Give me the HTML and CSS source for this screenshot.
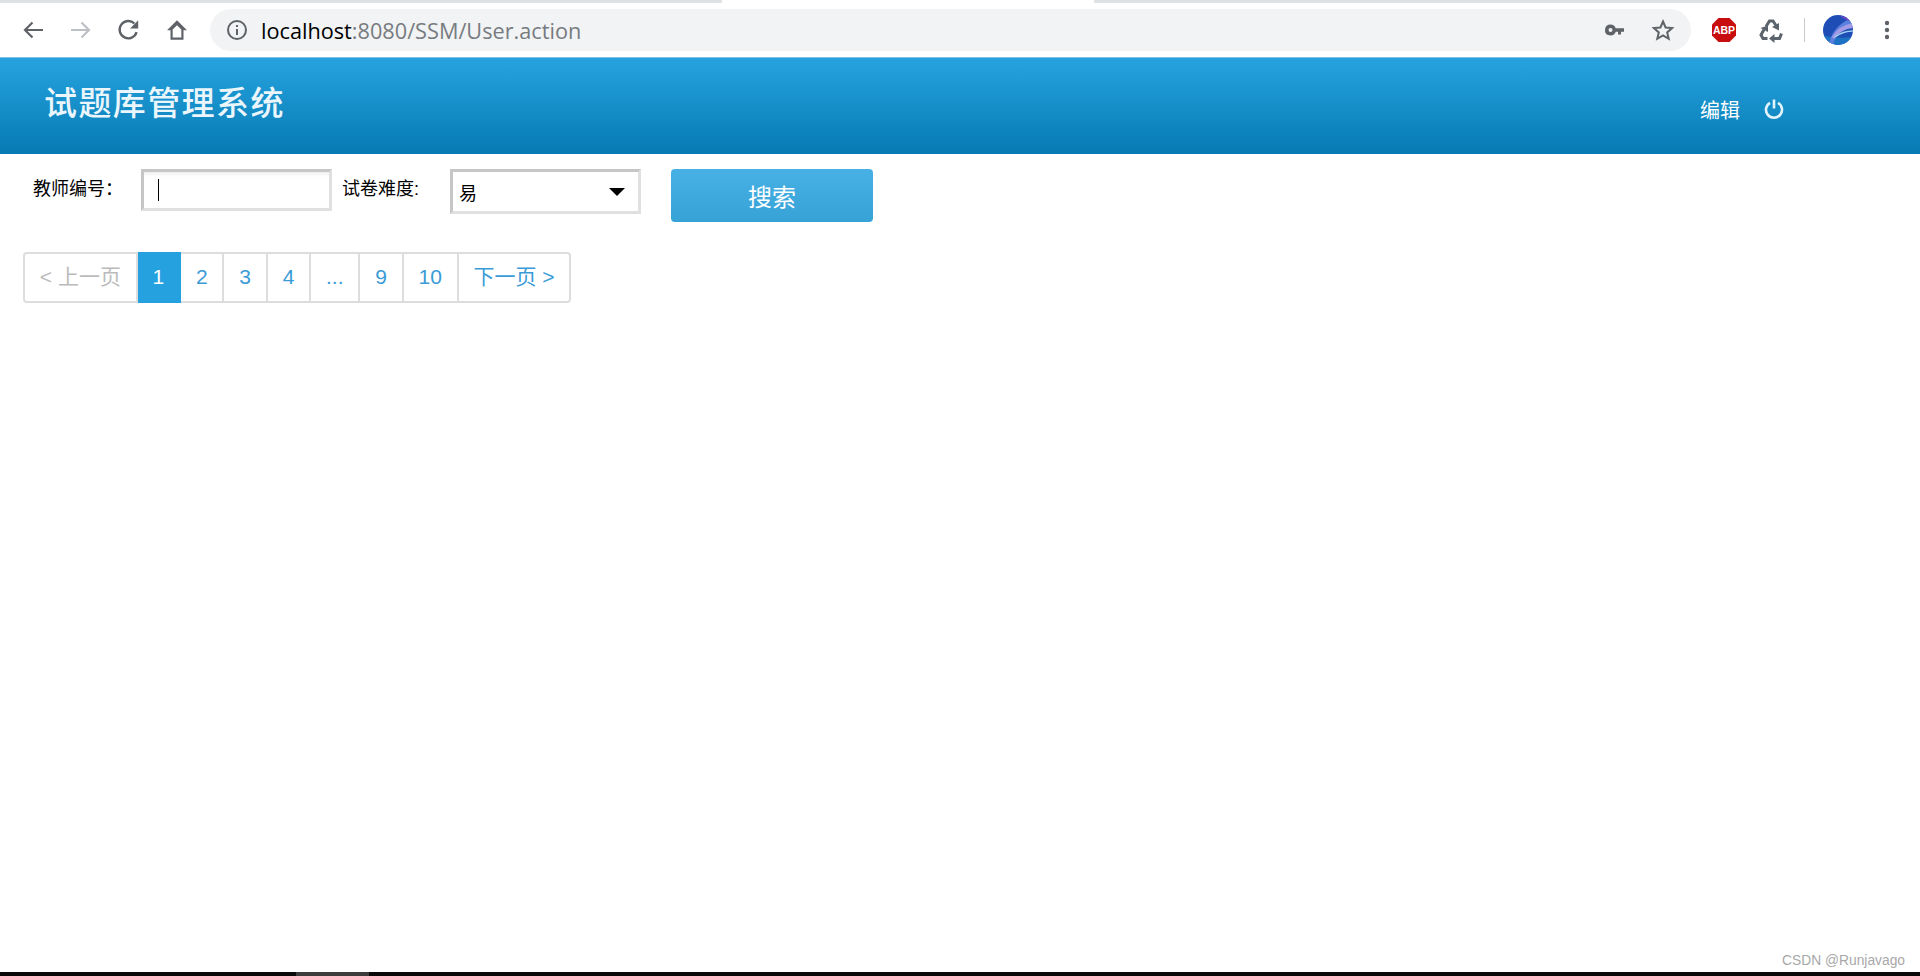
FILE: index.html
```html
<!DOCTYPE html>
<html lang="zh-CN">
<head>
  <meta charset="UTF-8">
  <meta name="viewport" content="width=device-width, initial-scale=1.0">
  <title>试题库管理系统</title>
  <link rel="stylesheet" href="styles.css">
</head>
<body>
  <div class="tabstrip">
    <div class="tabstrip-left"></div>
    <div class="tabstrip-active"></div>
    <div class="tabstrip-right"></div>
  </div>

  <div class="toolbar">
    <div class="nav-btn">
      <svg width="24" height="24" viewBox="0 0 24 24"><path d="M22 12H4M11.500 4.500L4 12l7.500 7.500" fill="none" stroke="#5f6368" stroke-width="2.200"/></svg>
    </div>
    <div class="nav-btn">
      <svg width="24" height="24" viewBox="0 0 24 24"><path d="M2 12h18M12.500 4.500L20 12l-7.500 7.500" fill="none" stroke="#bdc1c6" stroke-width="2.200"/></svg>
    </div>
    <div class="nav-btn">
      <svg width="26" height="26" viewBox="0 0 24 24"><path d="M19 14a8 8 0 1 1-2-8" fill="none" stroke="#5f6368" stroke-width="2.200"/><path d="M20.500 3v7.500H13z" fill="#5f6368"/></svg>
    </div>
    <div class="nav-btn">
      <svg width="26" height="26" viewBox="0 0 24 24"><path d="M12 3L2.800 12.300h3.200v8.700h12v-8.700h3.200zM8 19v-7.500l4-4 4 4V19z" fill="#5f6368" fill-rule="evenodd"/></svg>
    </div>

    <div class="omnibox">
      <svg class="info-icon" width="22" height="22" viewBox="0 0 22 22"><circle cx="11" cy="11" r="9" fill="none" stroke="#5f6368" stroke-width="2"/><path d="M10 10h2v6h-2zM10 6h2v2h-2z" fill="#5f6368"/></svg>
      <div class="url"><span class="url-host">localhost</span>:8080/SSM/User.action</div>
      <svg class="key-icon" width="24" height="24" viewBox="0 0 24 24"><path d="M7.500 6.500a5.500 5.500 0 1 0 5.200 7.300H15v2.700h3v-2.700h3v-3.600h-8.300a5.500 5.500 0 0 0-5.200-3.700zm0 3.500a2 2 0 1 1 0 4 2 2 0 0 1 0-4z" fill="#5f6368" fill-rule="evenodd"/></svg>
      <svg class="star-icon" width="24" height="24" viewBox="0 0 24 24"><path d="M12 3.500l2.600 6 6.500.6-4.900 4.300 1.500 6.400-5.700-3.400-5.700 3.400 1.500-6.400-4.900-4.300 6.500-.6z" fill="none" stroke="#5f6368" stroke-width="2" stroke-linejoin="miter"/></svg>
    </div>

    <div class="ext-icons">
      <svg class="abp-icon" width="26" height="26" viewBox="0 0 26 26"><path d="M7.500 1h11L25 7.500v11L18.500 25h-11L1 18.500v-11z" fill="#c70d0d"/><text x="13" y="17" text-anchor="middle" class="abp-text">ABP</text></svg>
      <svg class="recycle-icon" width="26" height="26" viewBox="0 0 26 26">
        <path d="M8 9.500L11.500 4h3.500L18 8.500" fill="none" stroke="#5b646c" stroke-width="3"/>
        <path d="M14 10l7-4v7.500z" fill="#5b646c"/>
        <path d="M9.500 21.500H5L3 18l3-5.500" fill="none" stroke="#5b646c" stroke-width="3"/>
        <path d="M2.500 11l7.500-2.500V15z" fill="#5b646c"/>
        <path d="M23.500 16.500L21.500 21.500H15" fill="none" stroke="#5b646c" stroke-width="3"/>
        <path d="M11 21.500l5.500-4.500v9z" fill="#5b646c"/>
      </svg>
      <div class="ext-divider"></div>
      <svg class="avatar" width="30" height="30" viewBox="0 0 30 30">
        <defs><clipPath id="avatarClip"><circle cx="15" cy="15" r="15"/></clipPath></defs>
        <g clip-path="url(#avatarClip)">
          <rect width="30" height="30" fill="#1d4db5"/>
          <path d="M0 30L0 20Q12 24 30 22V30z" fill="#1c73c4"/>
          <path d="M6 30Q8 12 30 2V8Q14 14 10 30z" fill="#5b7fdc"/>
          <path d="M9 22Q16 10 30 8V13Q18 14 11 24z" fill="#a49be6"/>
          <path d="M12 22Q20 16 30 16" fill="none" stroke="#9fd0f2" stroke-width="1.500"/>
          <path d="M16 0Q24 4 30 0V6Q22 6 16 0z" fill="#6b46c9"/>
        </g>
      </svg>
      <svg class="menu-icon" width="6" height="22" viewBox="0 0 6 22"><circle cx="3" cy="4" r="2.200" fill="#5f6368"/><circle cx="3" cy="11" r="2.200" fill="#5f6368"/><circle cx="3" cy="18" r="2.200" fill="#5f6368"/></svg>
    </div>
  </div>

  <header class="site-header">
    <h1 class="site-title">试题库管理系统</h1>
    <div class="header-actions">
      <a class="header-link">编辑</a>
      <svg class="power-icon" width="22" height="22" viewBox="0 0 22 22"><path d="M7 4.800a8 8 0 1 0 8 0" fill="none" stroke="#e3f3fb" stroke-width="2.600"/><path d="M11 1.500v9" stroke="#e3f3fb" stroke-width="2.600"/></svg>
    </div>
  </header>

  <main class="content">
    <form class="search-form">
      <label class="field-label">教师编号：</label>
      <div class="text-field">
        <input class="text-input" type="text">
        <span class="caret"></span>
      </div>
      <label class="field-label field-label-second">试卷难度:</label>
      <div class="select-field">
        <select class="select-input">
          <option>易</option>
          <option>中</option>
          <option>难</option>
        </select>
      </div>
      <button class="search-btn" type="button">搜索</button>
    </form>

    <ul class="pagination">
      <li class="page-item disabled">&lt; 上一页</li>
      <li class="page-item active">1</li>
      <li class="page-item">2</li>
      <li class="page-item">3</li>
      <li class="page-item">4</li>
      <li class="page-item">...</li>
      <li class="page-item">9</li>
      <li class="page-item">10</li>
      <li class="page-item">下一页 &gt;</li>
    </ul>
  </main>

  <div class="watermark">CSDN @Runjavago</div>

  <div class="taskbar">
    <div class="taskbar-item"></div>
  </div>
</body>
</html>
```

FILE: styles.css
```css
* {
  box-sizing: border-box;
}

html, body {
  height: 100%;
}

body {
  margin: 0;
  display: flex;
  flex-direction: column;
  position: relative;
  overflow: hidden;
  background-color: #fff;
  font-family: "Liberation Sans", "Noto Sans CJK SC", sans-serif;
  color: #000;
}

/* browser chrome */
.tabstrip {
  display: flex;
  height: 3px;
  flex: none;
}

.tabstrip-left {
  width: 722px;
  background-color: #dee1e6;
}

.tabstrip-active {
  width: 372px;
  background-color: #fff;
}

.tabstrip-right {
  flex: 1;
  background-color: #dee1e6;
}

.toolbar {
  display: flex;
  align-items: center;
  height: 54px;
  flex: none;
  padding-left: 15px;
  background-color: #fff;
}

.nav-btn {
  display: flex;
  align-items: center;
  justify-content: center;
  width: 36px;
  height: 36px;
  margin-right: 12px;
}

.omnibox {
  display: flex;
  align-items: center;
  width: 1481px;
  height: 42px;
  margin-left: 3px;
  padding: 0 10px 0 16px;
  border-radius: 21px;
  background-color: #f1f3f4;
}

.url {
  flex: 1;
  margin-left: 13px;
  font-family: "Open Sans", "Noto Sans", sans-serif;
  font-size: 21.700px;
  color: #777b80;
}

.url-host {
  color: #000;
}

.key-icon {
  margin-right: 24px;
}

.star-icon {
  margin-right: 6px;
}

.ext-icons {
  display: flex;
  align-items: center;
  flex: 1;
  padding-left: 20px;
}

.abp-text {
  font-family: "Liberation Sans", sans-serif;
  font-size: 10.500px;
  font-weight: 700;
  fill: #fff;
}

.recycle-icon {
  margin-left: 21px;
}

.ext-divider {
  width: 1px;
  height: 24px;
  margin-left: 20px;
  background-color: #ccc;
}

.avatar {
  margin-left: 18px;
}

.menu-icon {
  margin-left: 31px;
}

/* page header */
.site-header {
  display: flex;
  align-items: center;
  justify-content: space-between;
  height: 97px;
  flex: none;
  padding: 0 135px 0 44px;
  border-top: 1px solid #7fc0e0;
  background: linear-gradient(to bottom, #26a3df, #067ab3);
}

.site-title {
  margin: 0 0 11px;
  font-size: 33px;
  font-weight: 500;
  letter-spacing: 1.400px;
  color: #eaf6fc;
}

.header-actions {
  display: flex;
  align-items: center;
  gap: 23px;
  margin-top: 6px;
}

.header-link {
  font-size: 20px;
  color: #fff;
}

/* search form */
.content {
  flex: 1;
  padding: 15px 0 0 23px;
}

.search-form {
  display: flex;
  align-items: flex-start;
}

.field-label {
  margin-left: 10px;
  width: 108px;
  font-size: 18px;
  line-height: 40px;
}

.field-label-second {
  margin-left: 10px;
}

.text-field {
  position: relative;
  width: 191px;
  height: 42px;
}

.text-input {
  display: block;
  width: 100%;
  height: 100%;
  border: 3px solid;
  border-color: #c6c6c6 #e0e0e0 #e0e0e0 #c6c6c6;
  outline: none;
  box-shadow: inset 0 5px 5px -4px #e4e4e4;
  background-color: #fff;
}

.caret {
  position: absolute;
  left: 17px;
  top: 10px;
  width: 1px;
  height: 22px;
  background-color: #000;
}

.select-field {
  position: relative;
  width: 191px;
  height: 45px;
}

.select-field::after {
  content: "";
  position: absolute;
  left: 159px;
  top: 19px;
  border-left: 8px solid transparent;
  border-right: 8px solid transparent;
  border-top: 8px solid #000;
}

.select-input {
  width: 100%;
  height: 100%;
  padding: 4px 0 0 6px;
  border: 3px solid;
  border-color: #c6c6c6 #e0e0e0 #e0e0e0 #c6c6c6;
  border-radius: 0;
  outline: none;
  appearance: none;
  background-color: #fff;
  font-family: "Liberation Sans", "Noto Sans CJK SC", sans-serif;
  font-size: 18px;
  color: #000;
}

.search-btn {
  width: 202px;
  height: 53px;
  margin-left: 30px;
  border: none;
  border-radius: 4px;
  background: linear-gradient(to bottom, #47b1e6, #37a2d6);
  font-family: "Liberation Sans", "Noto Sans CJK SC", sans-serif;
  font-size: 24px;
  color: #fff;
}

/* pagination */
.pagination {
  display: inline-flex;
  margin: 30px 0 0;
  padding: 0;
  list-style: none;
}

.page-item {
  height: 51px;
  padding: 0 14.830px;
  border: 2px solid #ddd;
  border-left-width: 0;
  font-size: 21px;
  line-height: 45px;
  color: #3a9bd6;
}

.page-item:first-child {
  border-left-width: 2px;
  border-radius: 4px 0 0 4px;
}

.page-item:last-child {
  border-radius: 0 4px 4px 0;
}

.page-item.disabled {
  color: #bbb;
}

.page-item.active {
  border-color: #25a1df;
  background-color: #25a1df;
  color: #fff;
}

/* screenshot leftovers */
.watermark {
  position: absolute;
  right: 15px;
  bottom: 8px;
  font-size: 13.800px;
  color: #a8a8a8;
}

.taskbar {
  height: 4px;
  flex: none;
  padding-left: 296px;
  background-color: #0a0a0a;
}

.taskbar-item {
  width: 73px;
  height: 100%;
  background-color: #3c3c3c;
}
```
